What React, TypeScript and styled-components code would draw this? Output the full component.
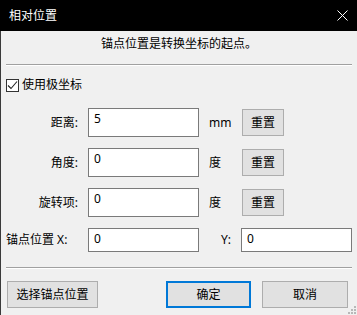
import styled, { createGlobalStyle } from "styled-components"

const Global = createGlobalStyle`
  html, body {
    margin: 0;
    padding: 0;
    background: #f0f0f0;
  }
  * {
    box-sizing: border-box;
  }
`

const Window = styled.div`
  width: 357px;
  height: 315px;
  display: flex;
  flex-direction: column;
  background: #f0f0f0;
  font-family: "Noto Sans", "Noto Sans CJK SC", sans-serif;
  font-size: 12px;
  color: #000;
  position: relative;
  overflow: hidden;
`

const TitleBar = styled.div`
  height: 31px;
  flex: none;
  background: #000;
  color: #fff;
  display: flex;
  align-items: center;
  justify-content: space-between;
  padding: 0 9px 0 9px;
  line-height: 16px;
`

const Body = styled.div`
  flex: 1;
  display: flex;
  flex-direction: column;
  border-left: 1px solid #3a3a3a;
  padding: 5px 5px 0 5px;
`

const Hint = styled.div`
  text-align: center;
  line-height: 16px;
`

const Divider = styled.div<{ $top: number }>`
  height: 2px;
  border-top: 1px solid #a0a0a0;
  border-bottom: 1px solid #fff;
  margin: ${(p) => p.$top}px 0 0 0;
`

const CheckRow = styled.label`
  display: flex;
  align-items: center;
  gap: 3px;
  margin-top: 11px;
  line-height: 16px;
`

const Box = styled.span`
  width: 13px;
  height: 13px;
  border: 1px solid #333;
  background: #fff;
  display: flex;
  align-items: center;
  justify-content: center;
`

const Form = styled.div`
  display: grid;
  grid-template-columns: 82px 111px 42px 111px;
  row-gap: 11px;
  margin-top: 15px;
  align-items: center;
`

const Label = styled.span<{ $left?: boolean }>`
  text-align: ${(p) => (p.$left ? "left" : "right")};
  padding-right: ${(p) => (p.$left ? 0 : 10)}px;
  line-height: 16px;
  white-space: nowrap;
`

const Field = styled.div<{ $h: number }>`
  height: ${(p) => p.$h}px;
  border: 1px solid #7a7a7a;
  background: #fff;
  padding: 2px 5px 0 5px;
  line-height: 16px;
`

const Unit = styled.span<{ $right?: boolean }>`
  line-height: 16px;
  padding-left: ${(p) => (p.$right ? 0 : 10)}px;
  padding-right: ${(p) => (p.$right ? 10 : 0)}px;
  text-align: ${(p) => (p.$right ? "right" : "left")};
`

const Button = styled.button<{ $w: number; $primary?: boolean }>`
  width: ${(p) => p.$w}px;
  height: 27px;
  font: inherit;
  line-height: 16px;
  color: #000;
  background: #e1e1e1;
  border: ${(p) => (p.$primary ? "2px solid #0078d7" : "1px solid #adadad")};
  padding: 0;
  margin: 0;
  cursor: pointer;
`

const ResetButton = styled(Button)`
  margin-left: 1px;
`

const Footer = styled.div`
  display: flex;
  align-items: center;
  margin-top: 12px;
  padding-left: 1px;
`

const Spacer = styled.div`
  flex: 1;
`

const FooterRight = styled.div`
  display: flex;
  gap: 11px;
  margin-right: 4px;
`

const Grip = styled.svg`
  position: absolute;
  right: 1px;
  bottom: 1px;
`

function CloseIcon() {
  return (
    <svg width="11" height="11" viewBox="0 0 11 11">
      <path d="M0.5 0.5 L10.5 10.5 M10.5 0.5 L0.5 10.5" stroke="#fff" strokeWidth="1" />
    </svg>
  )
}

function Check() {
  return (
    <svg width="11" height="11" viewBox="0 0 11 11">
      <path d="M1 5.5 L4 8.5 L10 1.5" fill="none" stroke="#222" strokeWidth="1.1" />
    </svg>
  )
}

export default function App() {
  return (
    <>
      <Global />
      <Window>
        <TitleBar>
          <span>相对位置</span>
          <CloseIcon />
        </TitleBar>
        <Body>
          <Hint>锚点位置是转换坐标的起点。</Hint>
          <Divider $top={12} />
          <CheckRow>
            <Box>
              <Check />
            </Box>
            使用极坐标
          </CheckRow>
          <Form>
            <Label>距离:</Label>
            <Field $h={29}>5</Field>
            <Unit>mm</Unit>
            <ResetButton $w={42}>重置</ResetButton>

            <Label>角度:</Label>
            <Field $h={29}>0</Field>
            <Unit>度</Unit>
            <ResetButton $w={42}>重置</ResetButton>

            <Label>旋转项:</Label>
            <Field $h={29}>0</Field>
            <Unit>度</Unit>
            <ResetButton $w={42}>重置</ResetButton>

            <Label $left>锚点位置 X:</Label>
            <Field $h={24}>0</Field>
            <Unit $right>Y:</Unit>
            <Field $h={24}>0</Field>
          </Form>
          <Divider $top={15} />
          <Footer>
            <Button $w={91}>选择锚点位置</Button>
            <Spacer />
            <FooterRight>
              <Button $w={85} $primary>确定</Button>
              <Button $w={86}>取消</Button>
            </FooterRight>
          </Footer>
        </Body>
        <Grip width="8" height="8" viewBox="0 0 8 8">
          <rect x="6" y="0" width="2" height="2" fill="#b8b8b8" />
          <rect x="3" y="3" width="2" height="2" fill="#b8b8b8" />
          <rect x="6" y="3" width="2" height="2" fill="#b8b8b8" />
          <rect x="0" y="6" width="2" height="2" fill="#b8b8b8" />
          <rect x="3" y="6" width="2" height="2" fill="#b8b8b8" />
          <rect x="6" y="6" width="2" height="2" fill="#b8b8b8" />
        </Grip>
      </Window>
    </>
  )
}
